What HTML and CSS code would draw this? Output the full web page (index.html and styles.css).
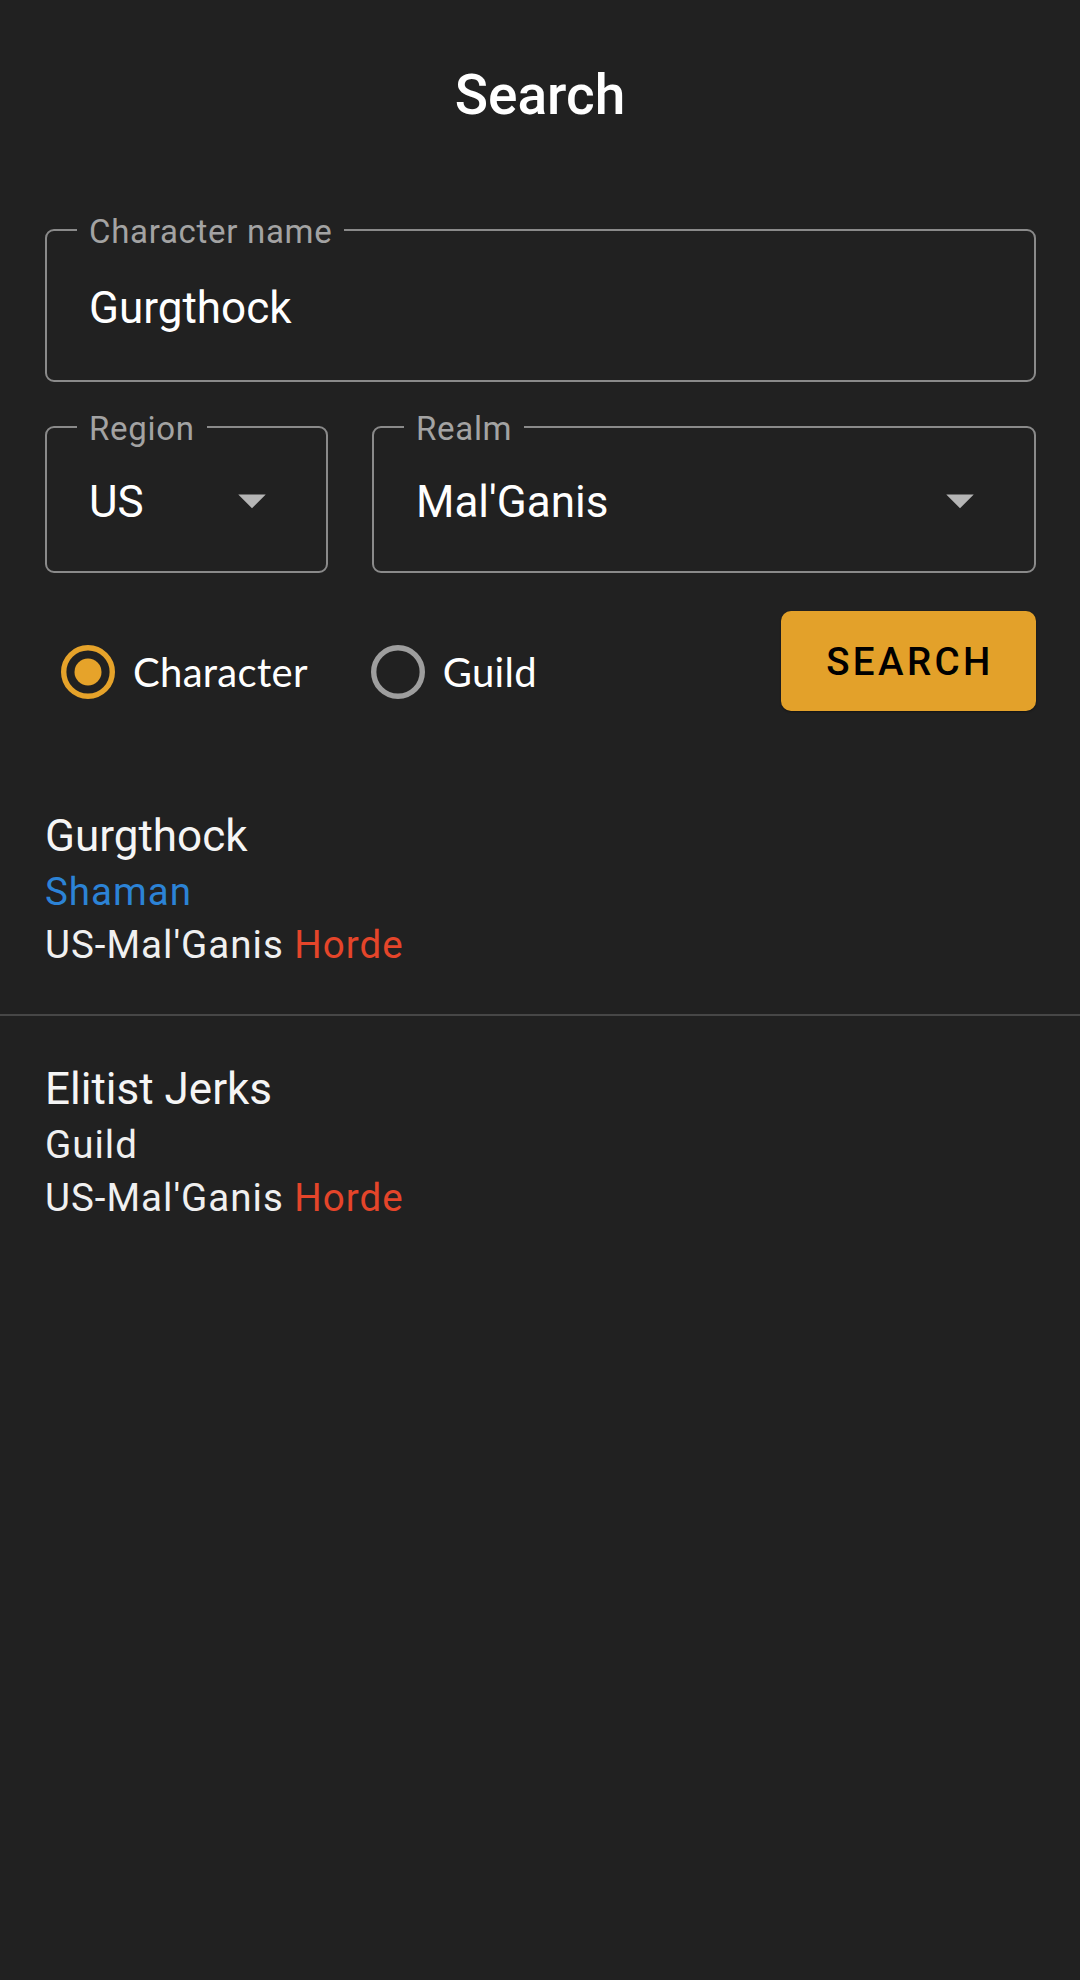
FILE: index.html
```html
<!DOCTYPE html>
<html lang="en">
<head>
<meta charset="utf-8">
<title>Search</title>
<link rel="stylesheet" href="styles.css">
</head>
<body>
<header class="appbar">
  <h1 class="title">Search</h1>
</header>
<main>
  <section class="form">
    <div class="field field-name">
      <span class="field-label">Character name</span>
      <span class="field-value">Gurgthock</span>
    </div>
    <div class="selects">
      <div class="field field-select">
        <span class="field-label">Region</span>
        <span class="field-value">US</span>
        <svg class="arrow" viewBox="0 0 24 24"><path d="M7 10l5 5 5-5z"/></svg>
      </div>
      <div class="field field-select">
        <span class="field-label">Realm</span>
        <span class="field-value">Mal'Ganis</span>
        <svg class="arrow" viewBox="0 0 24 24"><path d="M7 10l5 5 5-5z"/></svg>
      </div>
    </div>
    <div class="actions">
      <div class="radios">
        <label class="radio radio-checked">
          <svg class="radio-icon" viewBox="0 0 20 20"><circle class="ring" cx="10" cy="10" r="9"/><circle class="dot" cx="10" cy="10" r="5"/></svg>
          <span class="radio-text">Character</span>
        </label>
        <label class="radio">
          <svg class="radio-icon" viewBox="0 0 20 20"><circle class="ring" cx="10" cy="10" r="9"/></svg>
          <span class="radio-text">Guild</span>
        </label>
      </div>
      <button class="search-btn" type="button">SEARCH</button>
    </div>
  </section>
  <ul class="results">
    <li class="result">
      <div class="result-name">Gurgthock</div>
      <div class="result-line shaman">Shaman</div>
      <div class="result-line">US-Mal'Ganis <span class="horde">Horde</span></div>
    </li>
    <li class="result">
      <div class="result-name">Elitist Jerks</div>
      <div class="result-line">Guild</div>
      <div class="result-line">US-Mal'Ganis <span class="horde">Horde</span></div>
    </li>
  </ul>
</main>
</body>
</html>
```
FILE: styles.css
```css
* {
  box-sizing: border-box;
}

html, body {
  margin: 0;
  padding: 0;
}

body {
  background: #212121;
  color: #ffffff;
  font-family: Roboto, "Liberation Sans", sans-serif;
  min-height: 1980px;
}

.appbar {
  padding-top: 62px;
  display: flex;
  justify-content: center;
}

.title {
  margin: 0;
  font-size: 55px;
  line-height: 66px;
  font-weight: 500;
  color: #ffffff;
}

.form {
  padding: 0 44px 0 45px;
  margin-top: 101px;
}

.field {
  position: relative;
  border: 2px solid #8a8a8a;
  border-radius: 9px;
  display: flex;
  align-items: center;
}

.field-label {
  position: absolute;
  top: -16px;
  left: 30px;
  padding: 0 12px;
  background: #212121;
  color: #a3a3a3;
  font-size: 33px;
  line-height: 33px;
  letter-spacing: 0.7px;
}

.field-value {
  font-size: 44px;
  line-height: 52px;
  color: #ffffff;
}

.field-name {
  height: 153px;
  padding: 5px 42px 0 42px;
}

.selects {
  display: grid;
  grid-template-columns: 283px 1fr;
  column-gap: 44px;
  margin-top: 44px;
}

.field-select {
  height: 147px;
  padding: 4px 41px 0 42px;
  justify-content: space-between;
}

.arrow {
  width: 66px;
  height: 66px;
  fill: #b5b5b5;
  margin-bottom: 4px;
}

.actions {
  display: flex;
  justify-content: space-between;
  align-items: flex-start;
  margin-top: 38px;
}

.radios {
  display: flex;
  gap: 63px;
  margin-top: 34px;
  margin-left: 16px;
}

.radio {
  display: flex;
  align-items: center;
  gap: 18px;
  height: 54px;
}

.radio-icon {
  width: 54px;
  height: 54px;
}

.ring {
  fill: none;
  stroke: #9e9e9e;
  stroke-width: 2;
}

.radio-checked .ring {
  stroke: #e6a32a;
}

.dot {
  fill: #e6a32a;
}

.radio-text {
  font-family: Lato, "Open Sans", sans-serif;
  font-size: 40px;
  line-height: 54px;
  letter-spacing: 0.3px;
  color: #ffffff;
}

.search-btn {
  width: 255px;
  height: 100px;
  border: none;
  border-radius: 10px;
  background: #e3a12a;
  color: #000000;
  font-family: Roboto, "Liberation Sans", sans-serif;
  font-weight: 500;
  font-size: 38.5px;
  letter-spacing: 3.4px;
  padding: 0 0 0 3px;
  box-shadow: 0 1px 2px rgba(0, 0, 0, 0.4);
}

.results {
  list-style: none;
  margin: 52px 0 0 0;
  padding: 0;
}

.result {
  padding: 44px 45px 43px 45px;
}

.result + .result {
  border-top: 2px solid #474747;
}

.result-name {
  font-size: 44px;
  line-height: 58px;
  color: #f5f5f5;
}

.result-line {
  font-size: 38.5px;
  line-height: 53px;
  letter-spacing: 1px;
  color: #f0f0f0;
}

.shaman {
  color: #2c83d6;
}

.horde {
  color: #e5452a;
}
```
